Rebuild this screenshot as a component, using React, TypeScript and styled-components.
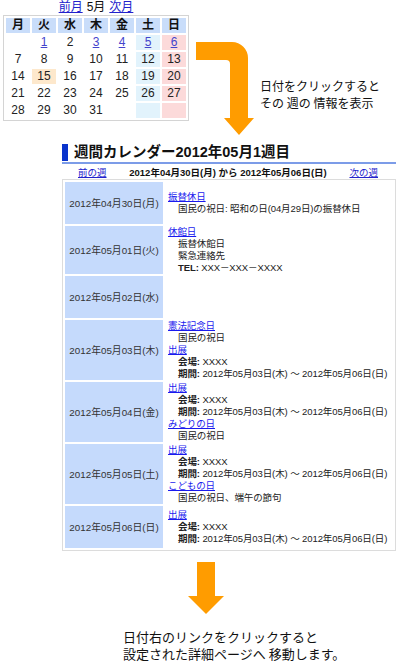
import React from "react";
import styled, { createGlobalStyle } from "styled-components";

const GlobalStyle = createGlobalStyle`
    body {
        margin: 0;
        background: #ffffff;
        font-family: "Liberation Sans", "Noto Sans CJK JP", sans-serif;
        color: #222222;
    }
`;

type DayCell = { label: string; link?: boolean; today?: boolean };

const calendarRows: DayCell[][] = [
    [{ label: "" }, { label: "1", link: true }, { label: "2" }, { label: "3", link: true }, { label: "4", link: true }, { label: "5", link: true }, { label: "6", link: true }],
    ["7", "8", "9", "10", "11", "12", "13"].map((label) => ({ label })),
    [{ label: "14" }, { label: "15", today: true }, { label: "16" }, { label: "17" }, { label: "18" }, { label: "19" }, { label: "20" }],
    ["21", "22", "23", "24", "25", "26", "27"].map((label) => ({ label })),
    ["28", "29", "30", "31", "", "", ""].map((label) => ({ label })),
];

const weekDays = ["月", "火", "水", "木", "金", "土", "日"];

type Line =
    | { kind: "link"; text: string }
    | { kind: "text"; text: string }
    | { kind: "field"; label: string; text: string };

const period = "2012年05月03日(木) ～ 2012年05月06日(日)";

const weekRows: { date: string; lines: Line[] }[] = [
    {
        date: "2012年04月30日(月)",
        lines: [
            { kind: "link", text: "振替休日" },
            { kind: "text", text: "国民の祝日: 昭和の日(04月29日)の振替休日" },
        ],
    },
    {
        date: "2012年05月01日(火)",
        lines: [
            { kind: "link", text: "休館日" },
            { kind: "text", text: "振替休館日" },
            { kind: "text", text: "緊急連絡先" },
            { kind: "field", label: "TEL:", text: "XXX－XXX－XXXX" },
        ],
    },
    { date: "2012年05月02日(水)", lines: [] },
    {
        date: "2012年05月03日(木)",
        lines: [
            { kind: "link", text: "憲法記念日" },
            { kind: "text", text: "国民の祝日" },
            { kind: "link", text: "出展" },
            { kind: "field", label: "会場:", text: "XXXX" },
            { kind: "field", label: "期間:", text: period },
        ],
    },
    {
        date: "2012年05月04日(金)",
        lines: [
            { kind: "link", text: "出展" },
            { kind: "field", label: "会場:", text: "XXXX" },
            { kind: "field", label: "期間:", text: period },
            { kind: "link", text: "みどりの日" },
            { kind: "text", text: "国民の祝日" },
        ],
    },
    {
        date: "2012年05月05日(土)",
        lines: [
            { kind: "link", text: "出展" },
            { kind: "field", label: "会場:", text: "XXXX" },
            { kind: "field", label: "期間:", text: period },
            { kind: "link", text: "こどもの日" },
            { kind: "text", text: "国民の祝日、端午の節句" },
        ],
    },
    {
        date: "2012年05月06日(日)",
        lines: [
            { kind: "link", text: "出展" },
            { kind: "field", label: "会場:", text: "XXXX" },
            { kind: "field", label: "期間:", text: period },
        ],
    },
];

export default function App() {
    return (
        <Page>
            <GlobalStyle />
            <TopArea>
                <MiniCalendar>
                    <MonthNav>
                        <NavLink href="#">前月</NavLink>
                        <span>5月</span>
                        <NavLink href="#">次月</NavLink>
                    </MonthNav>
                    <CalTable>
                        <thead>
                            <tr>
                                {weekDays.map((d) => (
                                    <CalHead key={d}>{d}</CalHead>
                                ))}
                            </tr>
                        </thead>
                        <tbody>
                            {calendarRows.map((row, r) => (
                                <tr key={r}>
                                    {row.map((cell, c) => (
                                        <CalCell
                                            key={c}
                                            $col={c}
                                            $today={!!cell.today}
                                        >
                                            {cell.link ? (
                                                <DayLink href="#">{cell.label}</DayLink>
                                            ) : (
                                                cell.label
                                            )}
                                        </CalCell>
                                    ))}
                                </tr>
                            ))}
                        </tbody>
                    </CalTable>
                </MiniCalendar>

                <BentArrow width="62" height="98" viewBox="0 0 62 98">
                    <path
                        d="M2 2 H38 A16 16 0 0 1 54 18 V78 H60 L45 95 L30 78 H36 V24 Q36 20 32 20 H2 Z"
                        fill="#ff9c00"
                    />
                </BentArrow>

                <Hint>
                    日付をクリックすると
                    <br />
                    その 週の 情報を表示
                </Hint>
            </TopArea>

            <WeekSection>
                <TitleWrap>
                    <Title>週間カレンダー2012年05月1週目</Title>
                </TitleWrap>
                <WeekNav>
                    <NavLink href="#">前の週</NavLink>
                    <Range>2012年04月30日(月) から 2012年05月06日(日)</Range>
                    <NavLink href="#">次の週</NavLink>
                </WeekNav>
                <WeekTable>
                    <colgroup>
                        <col style={{ width: 98 }} />
                        <col />
                    </colgroup>
                    <tbody>
                        {weekRows.map((row) => (
                            <tr key={row.date}>
                                <DateCell>{row.date}</DateCell>
                                <InfoCell>
                                    {row.lines.map((line, i) =>
                                        line.kind === "link" ? (
                                            <EventLink key={i} href="#">
                                                {line.text}
                                            </EventLink>
                                        ) : line.kind === "field" ? (
                                            <Detail key={i}>
                                                <b>{line.label}</b> {line.text}
                                            </Detail>
                                        ) : (
                                            <Detail key={i}>{line.text}</Detail>
                                        ),
                                    )}
                                </InfoCell>
                            </tr>
                        ))}
                    </tbody>
                </WeekTable>
            </WeekSection>

            <DownArrow width="40" height="56" viewBox="0 0 40 56">
                <path d="M11 1 H29 V35 H38 L20 53 L2 35 H11 Z" fill="#ff9c00" />
            </DownArrow>

            <BottomHint>
                日付右のリンクをクリックすると
                <br />
                設定された詳細ページへ 移動します。
            </BottomHint>
        </Page>
    );
}

const Page = styled.div`
    width: 402px;
    min-height: 667px;
    display: flex;
    flex-direction: column;
`;

const TopArea = styled.div`
    display: flex;
    align-items: flex-start;
    height: 144px;
`;

const MiniCalendar = styled.div`
    display: flex;
    flex-direction: column;
    align-items: center;
    margin-left: 3px;
    width: 186px;
`;

const MonthNav = styled.div`
    display: flex;
    gap: 4px;
    height: 15px;
    font-size: 12px;
    line-height: 15px;
    color: #111;
`;

const NavLink = styled.a`
    color: #2222cc;
    text-decoration: underline;
`;

const CalTable = styled.table`
    border: 1px solid #d4d4d4;
    border-spacing: 2px;
    font-size: 12px;
`;

const CalHead = styled.th`
    width: 24px;
    height: 15px;
    padding: 0;
    background: #c9ddfa;
    font-weight: bold;
    font-size: 12px;
    line-height: 15px;
    color: #111;
`;

const colBg = (col: number, today: boolean) => {
    if (today) return "#fde8cc";
    if (col === 5) return "#e2f3fc";
    if (col === 6) return "#fcdada";
    return "transparent";
};

const CalCell = styled.td<{ $col: number; $today: boolean }>`
    width: 24px;
    height: 15px;
    padding: 0;
    text-align: center;
    line-height: 15px;
    color: #222;
    background: ${(p) => colBg(p.$col, p.$today)};
`;

const DayLink = styled.a`
    color: #4444cc;
    text-decoration: underline;
`;

const BentArrow = styled.svg`
    margin: 40px 0 0 5px;
    flex-shrink: 0;
`;

const Hint = styled.p`
    margin: 77px 0 0 4px;
    font-family: "Noto Sans CJK JP", sans-serif;
    font-size: 12px;
    line-height: 17px;
    color: #111;
    white-space: nowrap;
`;

const WeekSection = styled.section`
    margin-left: 62px;
    width: 334px;
`;

const TitleWrap = styled.div`
    border-bottom: 2px solid #7c9ce8;
`;

const Title = styled.h2`
    margin: 0 0 1px;
    padding-left: 6px;
    border-left: 6px solid #0a33cc;
    font-family: "Liberation Sans", "Noto Sans CJK JP", sans-serif;
    font-size: 14.5px;
    font-weight: bold;
    line-height: 17px;
    color: #111;
`;

const WeekNav = styled.div`
    display: flex;
    align-items: center;
    justify-content: space-between;
    padding: 0 18px 0 16px;
    height: 15px;
    font-size: 9.5px;
    white-space: nowrap;
`;

const Range = styled.span`
    font-weight: bold;
    color: #111;
`;

const WeekTable = styled.table`
    width: 100%;
    table-layout: fixed;
    border: 1px solid #dcdcdc;
    border-spacing: 2px;
    font-size: 9.5px;
    letter-spacing: -0.1px;
`;

const DateCell = styled.td`
    height: 42px;
    padding: 0;
    background: #c5dafc;
    text-align: center;
    vertical-align: middle;
    white-space: nowrap;
    font-size: 9.8px;
    letter-spacing: 0;
    color: #333;
`;

const InfoCell = styled.td`
    padding: 0 0 0 3px;
    vertical-align: middle;
    line-height: 12px;
    color: #222;
`;

const EventLink = styled.a`
    display: block;
    width: fit-content;
    height: 12px;
    line-height: 12px;
    color: #1a1aee;
    text-decoration: underline;
`;

const Detail = styled.div`
    height: 12px;
    line-height: 12px;
    padding-left: 10px;
    white-space: nowrap;

    b {
        font-weight: bold;
    }
`;

const DownArrow = styled.svg`
    align-self: flex-start;
    margin: 10px 0 0 186px;
`;

const BottomHint = styled.p`
    margin: 11px 0 0 123px;
    font-family: "Noto Sans CJK JP", sans-serif;
    font-size: 13px;
    line-height: 17px;
    color: #111;
    white-space: nowrap;
`;
